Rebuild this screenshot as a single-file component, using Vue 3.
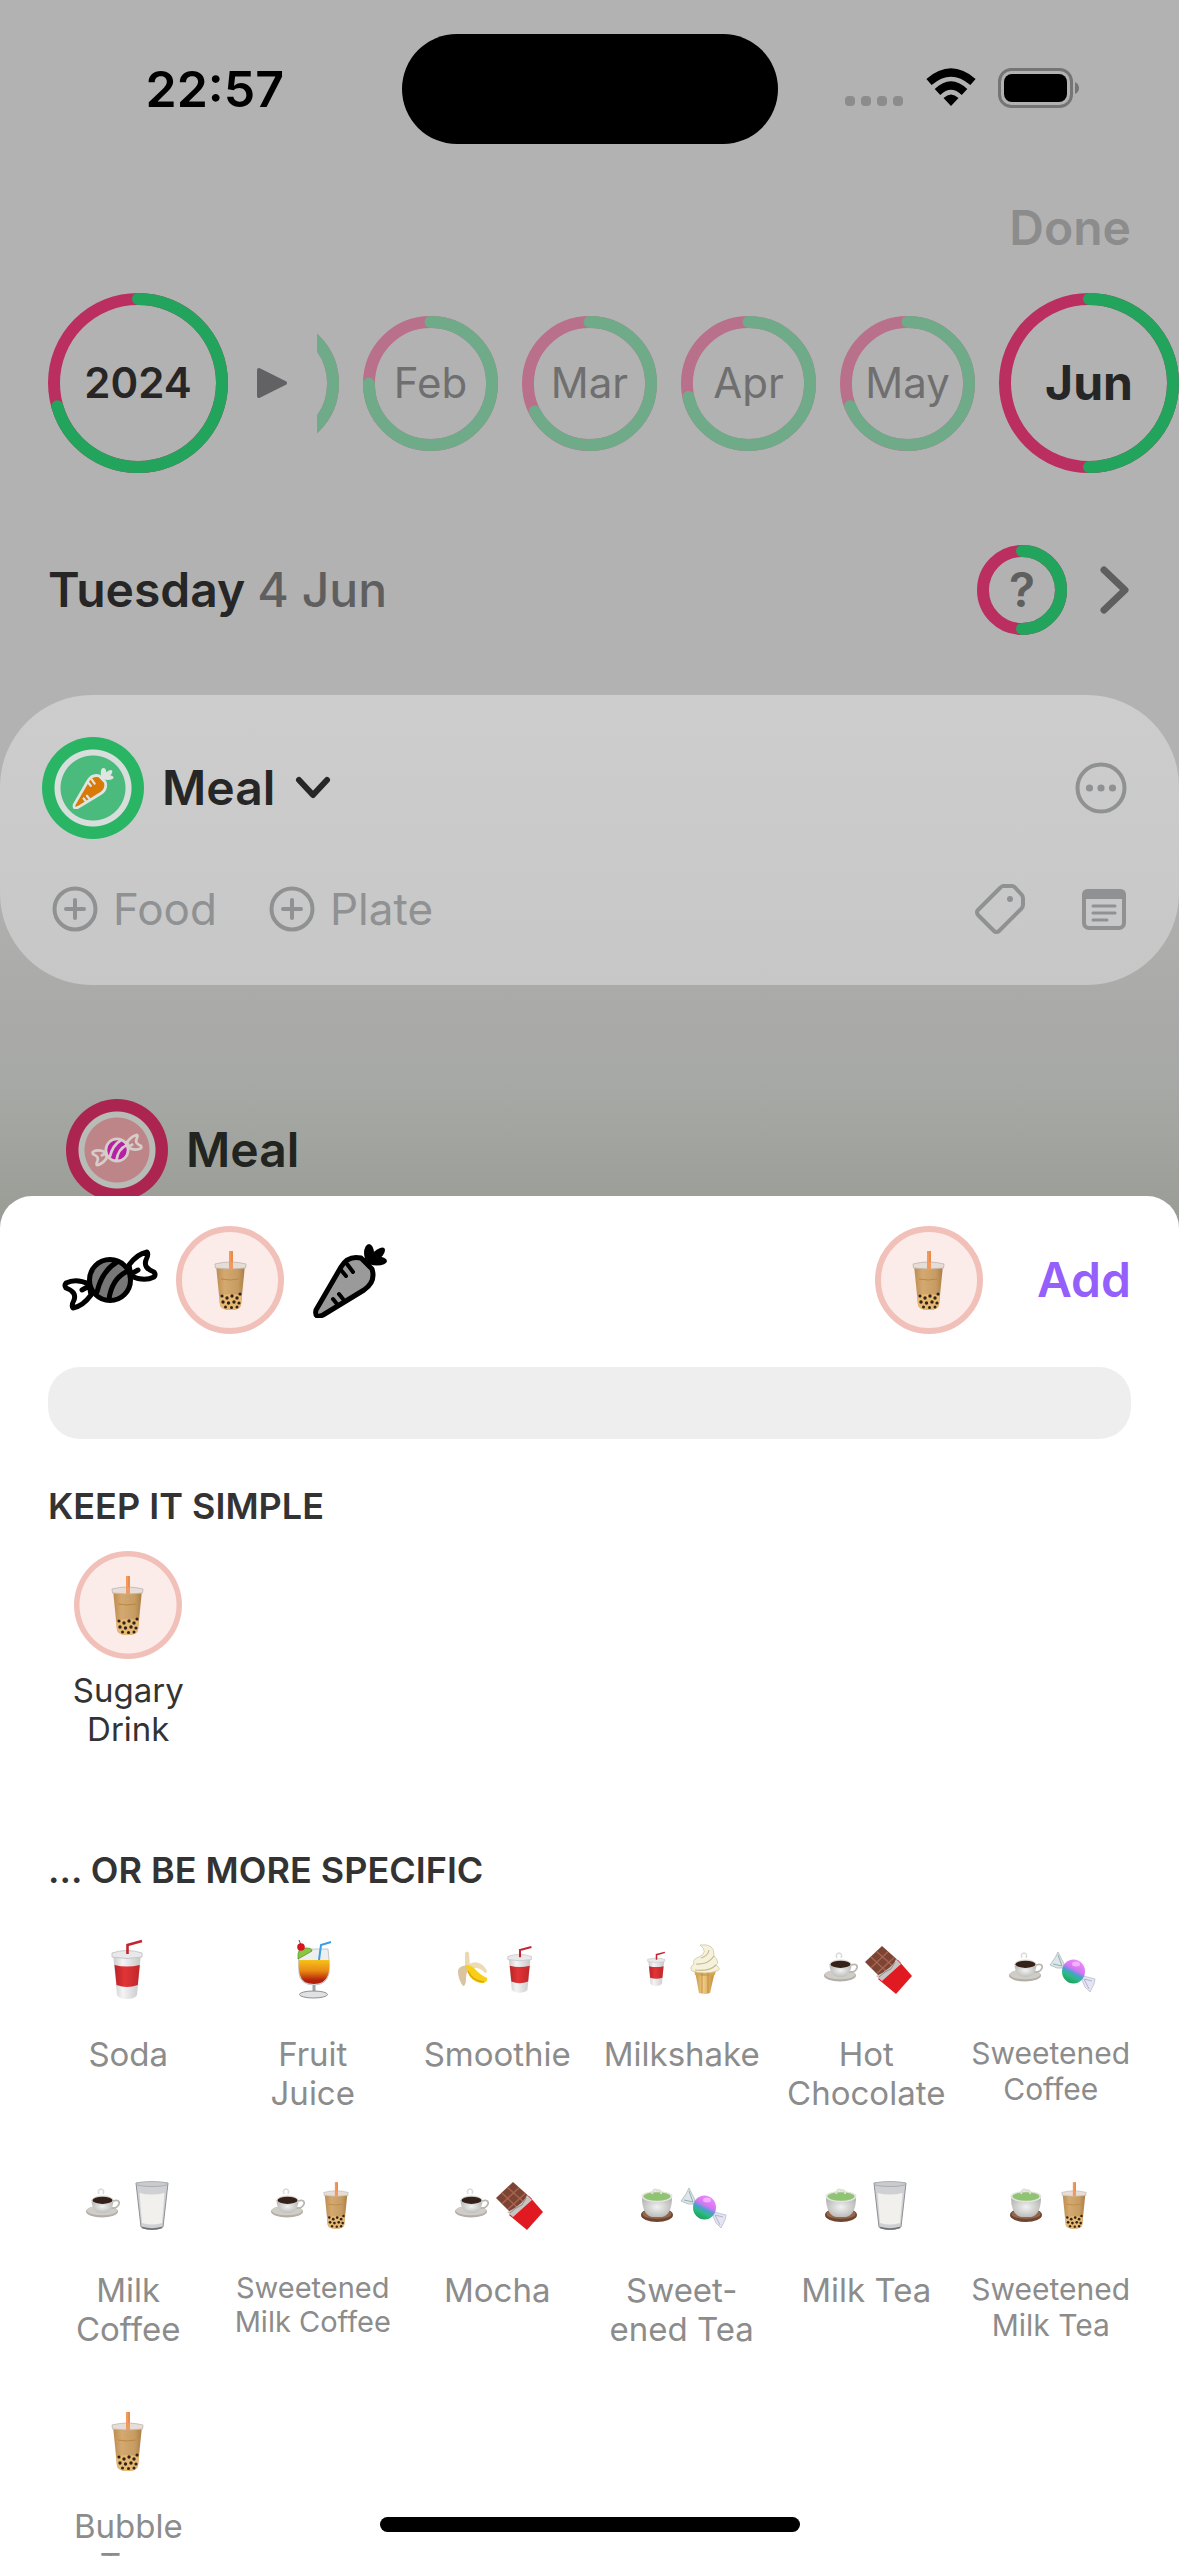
<script setup>
import { ref } from 'vue'

const search = ref('')

// January is scrolled mostly out of view, so only its arc is drawn
const months = [
  { id: 'January', label: '', good: 72 },
  { id: 'February', label: 'Feb', good: 75 },
  { id: 'March', label: 'Mar', good: 67.5 },
  { id: 'April', label: 'Apr', good: 71.5 },
  { id: 'May', label: 'May', good: 69 },
  { id: 'June', label: 'Jun', good: 50, current: true },
]

// Icon placement inside the 108 x 108 artwork box of a tile
const coffee = { id: 'coffee', x: 12, y: 36, w: 34, h: 31 }
const tea = { id: 'tea', x: 13, y: 36, w: 32, h: 35 }
const boba = { id: 'boba', x: 37, y: 24, w: 33, h: 60 }
const bobaSmall = { id: 'boba', x: 64, y: 30, w: 26, h: 48 }
const chocolate = { id: 'chocolate', x: 53, y: 30, w: 47, h: 49 }
const sweet = { id: 'sweet', x: 52, y: 36, w: 47, h: 42 }
const milk = { id: 'milk', x: 61, y: 30, w: 34, h: 49 }

const simple = [{ lines: ['Sugary', 'Drink'], art: [boba] }]

const specific = [
  { lines: ['Soda'], art: [{ id: 'soda', x: 37, y: 24, w: 33, h: 60 }] },
  { lines: ['Fruit', 'Juice'], art: [{ id: 'juice', x: 37, y: 24, w: 36, h: 60 }] },
  { lines: ['Smoothie'], art: [{ id: 'banana', x: 14, y: 36, w: 31, h: 36 }, { id: 'soda', x: 64, y: 30, w: 26, h: 48 }] },
  { lines: ['Milkshake'], art: [{ id: 'soda', x: 19, y: 36, w: 19, h: 35 }, { id: 'cone', x: 62, y: 29, w: 30, h: 50 }] },
  { lines: ['Hot', 'Chocolate'], art: [coffee, chocolate] },
  { lines: ['Sweetened', 'Coffee'], size: 'medium', art: [coffee, sweet] },
  { lines: ['Milk', 'Coffee'], art: [coffee, milk] },
  { lines: ['Sweetened', 'Milk Coffee'], size: 'small', art: [coffee, bobaSmall] },
  { lines: ['Mocha'], art: [coffee, chocolate] },
  { lines: ['Sweet-', 'ened Tea'], art: [tea, sweet] },
  { lines: ['Milk Tea'], art: [tea, milk] },
  { lines: ['Sweetened', 'Milk Tea'], size: 'medium', art: [tea, bobaSmall] },
  { lines: ['Bubble', 'Tea'], art: [boba] },
]
</script>

<template>
  <div class="screen">
    <svg class="sprite" width="0" height="0" aria-hidden="true">
      <defs>
        <linearGradient id="gTea" x1="0" x2="1" y1="0" y2="0">
          <stop offset="0" stop-color="#bb8c50" /><stop offset=".3" stop-color="#d4a970" />
          <stop offset=".75" stop-color="#c79c62" /><stop offset="1" stop-color="#a97c42" />
        </linearGradient>
        <linearGradient id="gCup" x1="0" x2="1" y1="0" y2="0">
          <stop offset="0" stop-color="#c9c9cb" /><stop offset=".35" stop-color="#f4f4f5" />
          <stop offset="1" stop-color="#c6c6c9" />
        </linearGradient>
        <linearGradient id="gRed" x1="0" x2="1" y1="0" y2="0">
          <stop offset="0" stop-color="#b92327" /><stop offset=".4" stop-color="#e13437" />
          <stop offset="1" stop-color="#c0272b" />
        </linearGradient>
        <linearGradient id="gJuice" x1="0" x2="0" y1="0" y2="1">
          <stop offset="0" stop-color="#f6c21c" /><stop offset=".45" stop-color="#e98a12" />
          <stop offset=".85" stop-color="#b3200b" />
        </linearGradient>
        <linearGradient id="gSweet" x1=".8" x2=".3" y1="0" y2="1">
          <stop offset="0" stop-color="#f08bff" /><stop offset=".42" stop-color="#d476f2" />
          <stop offset=".58" stop-color="#4a9fd0" /><stop offset=".72" stop-color="#2dbb83" />
          <stop offset="1" stop-color="#1d9c5d" />
        </linearGradient>
        <linearGradient id="gCone" x1="0" x2="1" y1="0" y2="0">
          <stop offset="0" stop-color="#c99343" /><stop offset=".4" stop-color="#f0cd85" />
          <stop offset="1" stop-color="#c08836" />
        </linearGradient>
        <radialGradient id="gBowl" cx=".5" cy=".5" r=".7">
          <stop offset="0" stop-color="#f1f1f1" /><stop offset="1" stop-color="#a9a9a7" />
        </radialGradient>
      </defs>

      <symbol id="boba" viewBox="0 0 33 60">
        <path d="M2 15 L6 55 Q7 60 16.500 60 Q26 60 27 55 L31 15Z" fill="url(#gTea)" />
        <path d="M5.200 46 L6 55 Q7 60 16.500 60 Q26 60 27 55 L27.800 46 Q17 42 5.200 46Z" fill="#e6b872" />
        <path d="M1 14 Q16.500 10 32 14 L31.500 18 Q16.500 20 1.500 18Z" fill="#e6ddd6" stroke="#bdb5b0" stroke-width=".8" />
        <path d="M17 1 V19" stroke="#f29a5e" stroke-width="4" />
        <path d="M18 1 V12" stroke="#e0803f" stroke-width="1" />
        <path d="M7 29 Q16 31 25 29" stroke="#b98843" stroke-width="1" fill="none" />
        <g fill="#2f2419">
          <circle cx="8" cy="46" r="1.600" /><circle cx="13" cy="48" r="1.700" /><circle cx="18" cy="46" r="1.700" /><circle cx="23" cy="48" r="1.700" /><circle cx="26" cy="44" r="1.500" />
          <circle cx="9" cy="52" r="1.700" /><circle cx="14.500" cy="53" r="1.700" /><circle cx="20" cy="52" r="1.700" /><circle cx="25" cy="53" r="1.600" />
          <circle cx="11.500" cy="57" r="1.500" /><circle cx="17.500" cy="57.500" r="1.500" /><circle cx="23" cy="57" r="1.500" />
        </g>
      </symbol>

      <symbol id="soda" viewBox="0 0 33 60">
        <path d="M2 14 L6 56 Q8 60 16 60 Q24 60 26 56 L30 14Z" fill="url(#gCup)" />
        <path d="M1 14 Q16 9 31 14 L31 18 Q16 21 1 18Z" fill="#e9e9ea" stroke="#bebec1" stroke-width=".8" />
        <path d="M3.500 26 Q16 29 28.800 26 L26.800 46 Q16 50 5.500 46Z" fill="url(#gRed)" />
        <path d="M16.500 15 V6 L31 2" stroke="#c32430" stroke-width="2.600" fill="none" />
      </symbol>

      <symbol id="juice" viewBox="0 0 36 60">
        <path d="M3 10 H32 Q34 24 33 34 Q31 46 18 46 Q4 46 3 34 Q2 22 3 10Z" fill="#eceeef" stroke="#b7bcc0" stroke-width=".8" />
        <path d="M3 21 H33 Q34 30 32 36 Q29 45 18 45 Q6 45 4 36 Q2 30 3 21Z" fill="url(#gJuice)" />
        <path d="M18 46 V54" stroke="#9da1a3" stroke-width="3" />
        <ellipse cx="17.500" cy="55.500" rx="14" ry="3.500" fill="#dfe1e2" stroke="#8e9294" stroke-width="1" />
        <path d="M2 20 Q1 8 10 9 Q16 9 16 12Z" fill="#8cc63f" stroke="#4f9a2b" stroke-width=".8" />
        <path d="M3 1 L5 6" stroke="#7a4a2a" stroke-width="1" />
        <circle cx="5" cy="8" r="3.800" fill="#d9131b" />
        <path d="M23 21 L25 6 L35 3" stroke="#3a9fe2" stroke-width="2" fill="none" />
      </symbol>

      <symbol id="banana" viewBox="0 0 31 36">
        <path d="M8 2 Q10 -1 12 2 L13 16 L8 16Z" fill="#ead9ae" />
        <path d="M10 14 Q0 15 1 22 Q2 30 6 35 Q9 35 9 28 Q9 20 13 18Z" fill="#d9c3a0" />
        <path d="M12 13 Q22 8 29 18 Q31 22 28 22 Q22 15 13 18Z" fill="#ecdbb5" />
        <path d="M9 15 Q12 13 17 17 Q23 24 30 27 Q31 31 26 32 Q12 32 9 15Z" fill="#f8cf16" />
        <path d="M11 20 Q15 30 27 31" stroke="#dda50b" stroke-width="1.500" fill="none" />
      </symbol>

      <symbol id="cone" viewBox="0 0 30 50">
        <path d="M5 27 H25 L20 49 Q15 51 9 49Z" fill="url(#gCone)" />
        <path d="M4 25 H26 L25 31 Q15 33 5 31Z" fill="#d6a654" />
        <path d="M12 29 V49 M18 29 V49" stroke="#b98438" stroke-width=".8" />
        <path d="M10 1 Q25 -1 24 12 Q30 18 26 21 Q32 25 27 27 Q15 31 2 27 Q-1 23 4 20 Q2 15 9 13 Q19 8 10 1Z" fill="#f5f1dd" stroke="#cfc79d" stroke-width=".8" />
        <path d="M6 20 Q18 21 24 12 M5 26 Q19 28 26 21 M11 14 Q18 12 19 6" stroke="#c4bd8b" stroke-width="1.200" fill="none" />
      </symbol>

      <symbol id="coffee" viewBox="0 0 34 31">
        <ellipse cx="16" cy="24.500" rx="16" ry="6" fill="#b3afa8" />
        <ellipse cx="16" cy="23.500" rx="15" ry="4.800" fill="#d0cdc7" />
        <path d="M27 14 Q34 12 33 17 Q31 22 25 21" stroke="#b9b6af" stroke-width="1.800" fill="none" />
        <path d="M5.500 13 Q6 26 16.500 26 Q27 26 27.500 13Z" fill="url(#gBowl)" />
        <ellipse cx="16.500" cy="13" rx="11" ry="4.400" fill="#dbd8d2" />
        <ellipse cx="16.500" cy="13.300" rx="10" ry="3.600" fill="#33211a" />
        <path d="M13 7 Q11 3 15 2 Q19 3 17 7" stroke="#dcdcdc" stroke-width="1.600" fill="none" />
      </symbol>

      <symbol id="tea" viewBox="0 0 32 35">
        <ellipse cx="16" cy="28" rx="16" ry="7" fill="#6d4531" />
        <ellipse cx="16" cy="27" rx="14.500" ry="5" fill="#94664c" />
        <path d="M1 10 Q1 28 11 30 H21 Q31 28 31 10Z" fill="url(#gBowl)" />
        <ellipse cx="16" cy="9.500" rx="15.500" ry="5.500" fill="#e4e4df" />
        <ellipse cx="16" cy="9.500" rx="13.500" ry="4.200" fill="#8fc472" />
        <path d="M11 7 Q12 1 16 3 Q21 3 20 7" stroke="#d9e2d5" stroke-width="2" fill="none" />
      </symbol>

      <symbol id="chocolate" viewBox="0 0 47 49">
        <path d="M17 1 L36 18 L17 34 L0 17Z" fill="#7c4433" />
        <path d="M5.700 11.700 L23 28 M11.300 6.300 L30 23 M23 6.700 L6 22.700 M29.500 12.300 L12 28.300" stroke="#a86450" stroke-width="1.400" />
        <path d="M33 15 L47 31 L31 49 L13 34Z" fill="#e01a20" />
        <path d="M31 14 L36 19 L17 36 L11 31 Q18 28 20 26 Q29 20 31 14Z" fill="#c7c5c3" />
        <path d="M30 17 L26 24 L20 27 L14 32" stroke="#8f8b88" stroke-width="1" fill="none" />
      </symbol>

      <symbol id="sweet" viewBox="0 0 47 42">
        <path d="M15 13 L9 1 L6 7 L1 14 L8 17 L14 17Z" fill="#dce5e7" stroke="#a7b8bb" stroke-width=".8" />
        <path d="M4 13 L13 15 L9 4" stroke="#8fb0ad" fill="none" stroke-width="1" />
        <path d="M34 25 L46 28 L45 33 L41 41 L36 36 L33 29Z" fill="#e4e5f1" stroke="#b9bcd2" stroke-width=".8" />
        <path d="M43 30 L35 28 L40 38" stroke="#b0b3d0" fill="none" stroke-width="1" />
        <ellipse cx="24.500" cy="20.500" rx="11.500" ry="12" fill="url(#gSweet)" />
        <ellipse cx="27" cy="13" rx="4" ry="2.500" fill="#fbc4ff" opacity=".7" />
      </symbol>

      <symbol id="milk" viewBox="0 0 34 49">
        <path d="M1 2 L6 46 Q17 51 28 46 L33 2Z" fill="#cfd0d3" stroke="#8d9094" stroke-width="1" />
        <path d="M4.500 12 Q17 15 29.500 12 L27 42 Q17 45 7 42Z" fill="#f1f0ed" />
        <ellipse cx="17" cy="3" rx="16" ry="2.500" fill="#c9cbcd" stroke="#a1a4a8" stroke-width=".8" />
        <path d="M7 46.500 Q17 49.500 27 46.500" stroke="#6f7275" stroke-width="1.600" fill="none" />
      </symbol>

      <symbol id="candy-line" viewBox="0 0 96 62">
        <g stroke="currentColor" stroke-width="5" stroke-linecap="round" stroke-linejoin="round">
          <path class="wing" d="M67 16 Q75 5 85 3 Q87 5 84 11 Q81 19 92 23 Q94 26 92 28 Q82 33 69 27Z M76 21 L69 25" />
          <path class="wing" d="M29 46 Q21 57 11 59 Q9 57 12 51 Q15 43 4 39 Q2 36 4 34 Q14 29 27 35Z M20 41 L27 37" />
          <circle cx="48" cy="31" r="20.500" class="body" />
          <path d="M55 13 Q40 22 35 43 M66 22 Q50 29 47 50" fill="none" />
        </g>
      </symbol>

      <symbol id="carrot-line" viewBox="0 0 76 76">
        <g fill="currentColor">
          <ellipse cx="57" cy="11" rx="5" ry="9" />
          <ellipse cx="65" cy="13" rx="4.500" ry="10" transform="rotate(48 65 13)" />
          <ellipse cx="65" cy="19" rx="10" ry="4.500" />
          <circle cx="57" cy="18" r="5" />
        </g>
        <path class="body" d="M4 68 L29 25 Q36 13 49 16 L60 27 Q64 40 52 48 L11 73 Q2 77 4 68Z" stroke="currentColor" stroke-width="5" stroke-linejoin="round" />
        <path d="M35 22 L41 30 M29 28 L34 34 M27 52 L31 57 M21 57 L25 62" stroke="currentColor" stroke-width="4" stroke-linecap="round" />
      </symbol>
    </svg>

    <main class="diary">
      <div class="status">
        <time class="clock">22:57</time>
        <div class="island"></div>
        <div class="signals">
          <svg width="60" height="40" viewBox="0 0 60 40" fill="#8c8c8c">
            <rect x="1" y="28" width="10" height="10" rx="4" /><rect x="17" y="28" width="10" height="10" rx="4" />
            <rect x="33" y="28" width="10" height="10" rx="4" /><rect x="49" y="28" width="10" height="10" rx="4" />
          </svg>
          <svg width="52" height="40" viewBox="0 0 52 40" fill="none" stroke="#000" stroke-width="8">
            <path d="M4 14 Q26 -5 48 14" /><path d="M12.500 24 Q26 11 39.500 24" />
            <path d="M26 38 L18.500 30 Q26 23 33.500 30Z" fill="#000" stroke="none" />
          </svg>
          <svg width="84" height="40" viewBox="0 0 84 40">
            <rect x="1.500" y="1.500" width="72" height="37" rx="12" fill="none" stroke="#757575" stroke-width="3" />
            <rect x="6" y="6" width="63" height="28" rx="8" />
            <path d="M77 14 Q81 16 81 20 Q81 24 77 26Z" fill="#757575" />
          </svg>
        </div>
      </div>

      <div class="top-action"><button class="done">Done</button></div>

      <nav class="periods">
        <button class="ring large year">
          <svg viewBox="0 0 180 180" class="arc">
            <circle cx="90" cy="90" r="84" class="bad" />
            <circle cx="90" cy="90" r="84" class="good" pathLength="100" stroke-dasharray="70.5 100" />
          </svg>
          <span>2024</span>
        </button>
        <svg class="play" width="32" height="32" viewBox="0 0 32 32"><path d="M3 3 L29 16 L3 29Z" fill="#626264" stroke="#626264" stroke-width="4" stroke-linejoin="round" /></svg>
        <div class="months">
          <button v-for="m in months" :key="m.id" class="ring" :class="m.current ? 'large current' : 'faded'" :aria-label="m.id">
            <svg v-if="m.current" viewBox="0 0 180 180" class="arc">
              <circle cx="90" cy="90" r="84" class="bad" />
              <circle cx="90" cy="90" r="84" class="good" pathLength="100" :stroke-dasharray="`${m.good} 100`" />
            </svg>
            <svg v-else viewBox="0 0 136 136" class="arc">
              <circle cx="68" cy="68" r="62" class="bad" />
              <circle cx="68" cy="68" r="62" class="good" pathLength="100" :stroke-dasharray="`${m.good} 100`" />
            </svg>
            <span v-if="m.label">{{ m.label }}</span>
          </button>
        </div>
      </nav>

      <div class="day">
        <h1>Tuesday <span>4 Jun</span></h1>
        <button class="ring mini">
          <svg viewBox="0 0 90 90" class="arc">
            <circle cx="45" cy="45" r="39" class="bad" />
            <circle cx="45" cy="45" r="39" class="good" pathLength="100" stroke-dasharray="50 100" />
          </svg>
          <span>?</span>
        </button>
        <button class="plain" aria-label="Next day">
          <svg width="30" height="48" viewBox="0 0 30 48"><path d="M5 4 L26 24 L5 44" fill="none" stroke="#5f5f5f" stroke-width="7" stroke-linecap="round" stroke-linejoin="round" /></svg>
        </button>
      </div>

      <section class="card">
        <div class="card-head">
          <span class="badge veg"><svg width="42" height="42"><use href="#carrot-line" /></svg></span>
          <button class="plain meal">Meal
            <svg width="36" height="24" viewBox="0 0 36 24"><path d="M4 4 L18 19 L32 4" fill="none" stroke="#262626" stroke-width="6" stroke-linecap="round" stroke-linejoin="round" /></svg>
          </button>
          <button class="plain push" aria-label="More">
            <svg width="52" height="52" viewBox="0 0 52 52" fill="#8f9193">
              <circle cx="26" cy="26" r="23.500" fill="none" stroke="#8f9193" stroke-width="4" />
              <circle cx="14.500" cy="26" r="3.600" /><circle cx="26" cy="26" r="3.600" /><circle cx="37.500" cy="26" r="3.600" />
            </svg>
          </button>
        </div>
        <div class="card-actions">
          <button v-for="a in ['Food', 'Plate']" :key="a" class="plain add-item">
            <svg width="46" height="46" viewBox="0 0 46 46" fill="none" stroke="#8f9193" stroke-width="4" stroke-linecap="round">
              <circle cx="23" cy="23" r="20.500" /><path d="M23 14 V32 M14 23 H32" />
            </svg>
            {{ a }}
          </button>
          <button class="plain push" aria-label="Tag">
            <svg width="50" height="50" viewBox="0 0 50 50" fill="none" stroke="#8f9193" stroke-width="4" stroke-linejoin="round">
              <path d="M28 2 H37 Q39 2 40.500 4 L46 10 Q48 12 48 14 V21 Q48 23 46 25 L24 47 Q21 49 19 47 L3 31 Q1 28 3 26 L25 4 Q27 2 28 2Z" />
              <circle cx="35" cy="15" r="3" fill="#8f9193" stroke="none" />
            </svg>
          </button>
          <button class="plain note" aria-label="Note">
            <svg width="46" height="42" viewBox="0 0 46 42" fill="none" stroke="#8f9193" stroke-linecap="round">
              <rect x="3" y="3" width="40" height="37" rx="5" stroke-width="4" />
              <path d="M3 9 V7 Q3 3 7 3 H39 Q43 3 43 7 V9Z" fill="#8f9193" stroke-width="4" />
              <path d="M12 18 H34 M12 25 H34 M12 32 H26" stroke-width="3" />
            </svg>
          </button>
        </div>
      </section>

      <section class="entry">
        <span class="badge sugar"><svg width="52" height="34"><use href="#candy-line" /></svg></span>
        <span class="meal">Meal</span>
      </section>
    </main>

    <section class="sheet">
      <div class="toolbar">
        <button class="pick" aria-label="Sweets"><svg class="ink dark" width="96" height="62"><use href="#candy-line" /></svg></button>
        <button class="pick selected" aria-label="Sugary drinks"><svg width="33" height="60"><use href="#boba" /></svg></button>
        <button class="pick" aria-label="Vegetables"><svg class="ink" width="76" height="76"><use href="#carrot-line" /></svg></button>
        <span class="pick selected push"><svg width="33" height="60"><use href="#boba" /></svg></span>
        <button class="plain add">Add</button>
      </div>

      <input v-model="search" class="search" type="text" aria-label="Search" />

      <h2>KEEP IT SIMPLE</h2>
      <div class="tiles">
        <button v-for="d in simple" :key="d.lines[0]" class="tile chosen">
          <svg class="art" viewBox="0 0 108 108">
            <use v-for="(i, n) in d.art" :key="n" :href="`#${i.id}`" :x="i.x" :y="i.y" :width="i.w" :height="i.h" />
          </svg>
          <span class="label"><span v-for="l in d.lines" :key="l">{{ l }}</span></span>
        </button>
      </div>

      <h2 class="second">... OR BE MORE SPECIFIC</h2>
      <div class="tiles">
        <button v-for="d in specific" :key="d.lines.join(' ')" class="tile">
          <svg class="art" viewBox="0 0 108 108">
            <use v-for="(i, n) in d.art" :key="n" :href="`#${i.id}`" :x="i.x" :y="i.y" :width="i.w" :height="i.h" />
          </svg>
          <span class="label" :class="d.size"><span v-for="l in d.lines" :key="l">{{ l }}</span></span>
        </button>
      </div>
    </section>

    <div class="home"></div>
  </div>
</template>

<style>
body { margin: 0; }
</style>

<style scoped>
* { box-sizing: border-box; }
.screen {
  position: relative;
  display: flex;
  flex-direction: column;
  height: 100vh;
  overflow: hidden;
  font-family: Inter, "Liberation Sans", sans-serif;
  color: #262626;
  background: linear-gradient(180deg, #b2b2b2 0, #b2b2b2 860px, #aaaaa9 1000px, #a7a9a6 1080px, #9c9f98 1200px, #8f938c 1300px);
}
.sprite { position: absolute; }
svg { display: block; flex: none; }
button {
  border: 0;
  padding: 0;
  background: none;
  font-family: inherit;
  color: inherit;
}
.push { margin-left: auto; }
.diary { flex: none; }

.status {
  display: grid;
  grid-template-columns: 1fr 376px 1fr;
  align-items: center;
  padding-top: 34px;
}
.clock {
  padding-left: 28px;
  text-align: center;
  font-size: 50px;
  line-height: 60px;
  font-weight: 600;
  color: #000;
}
.island { height: 110px; border-radius: 55px; background: #000; }
.signals {
  display: flex;
  justify-content: flex-end;
  gap: 21px;
  padding: 0 97px 2px 0;
}

.top-action {
  display: flex;
  justify-content: flex-end;
  margin-top: 54px;
  padding-right: 48px;
}
.done { font-size: 48px; line-height: 60px; font-weight: 600; color: #8c8c8c; }

.periods {
  display: flex;
  align-items: center;
  margin-top: 35px;
  padding-left: 48px;
}
.play { margin: 0 29px 0 28px; }
.months {
  flex: 1;
  min-width: 0;
  display: flex;
  justify-content: flex-end;
  align-items: center;
  gap: 24px;
  overflow: hidden;
}
.ring {
  flex: none;
  display: grid;
  place-items: center;
  width: 135px;
  height: 135px;
  font-size: 42px;
  line-height: 54px;
  color: #6f6f6f;
}
.ring > * { grid-area: 1 / 1; }
.ring.large { width: 180px; height: 180px; color: #262626; }
.ring.year { font-weight: 600; }
.ring.current { font-size: 48px; font-weight: 700; }
.ring.mini { width: 90px; height: 90px; font-size: 48px; font-weight: 600; color: #5f5f5f; }
.arc { width: 100%; height: 100%; transform: rotate(-90deg); }
.arc circle { fill: none; stroke-width: 12; }
.bad { stroke: #ba2f5f; }
.good { stroke: #22a45c; stroke-linecap: round; }
.faded .bad { stroke: #b9718b; }
.faded .good { stroke: #6fab88; }

.day {
  display: flex;
  align-items: center;
  margin-top: 72px;
  padding: 0 50px 0 48px;
}
.day h1 {
  flex: 1;
  margin: 0;
  font-size: 48px;
  line-height: 60px;
  font-weight: 600;
}
.day h1 span { color: #5f5f5f; font-weight: 500; }
.day .plain { margin-left: 32px; }

.card {
  margin-top: 60px;
  padding: 42px 52px 51px 42px;
  border-radius: 92px;
  background: linear-gradient(180deg, #cdcdcd, #c7c7c7);
}
.card-head { display: flex; align-items: center; gap: 18px; }
.badge {
  display: grid;
  place-items: center;
  width: 102px;
  height: 102px;
  border-radius: 50%;
}
.badge.veg {
  color: #dfe6e1;
  fill: #d97a08;
  background: radial-gradient(circle, #4abb7c 32px, #d8dedb 33px, #d8dedb 38px, #29b564 39px);
}
.badge.sugar {
  color: #d6cdca;
  fill: #b520a5;
  background: radial-gradient(circle, #bd8588 32px, #b8bcb6 33px, #b8bcb6 38px, #ab2550 39px);
}
.wing { fill: none; }
.meal {
  display: flex;
  align-items: center;
  gap: 20px;
  font-size: 48px;
  line-height: 60px;
  font-weight: 600;
}
.card-actions {
  display: flex;
  align-items: center;
  gap: 52px;
  margin-top: 45px;
  padding-left: 10px;
}
.note { margin-left: 4px; }
.add-item {
  display: flex;
  align-items: center;
  gap: 15px;
  font-size: 44px;
  line-height: 50px;
  color: #8f9193;
}

.entry {
  display: flex;
  align-items: center;
  gap: 18px;
  margin-top: 114px;
  padding-left: 66px;
}
.entry .meal { color: #22241f; }

.sheet {
  position: relative;
  flex: 1 0 auto;
  margin-top: -5px;
  padding-top: 30px;
  border-radius: 32px 32px 0 0;
  background: #fff;
}
.toolbar {
  display: flex;
  align-items: center;
  gap: 12px;
  padding: 0 48px 0 56px;
}
.pick {
  display: grid;
  place-items: center;
  width: 108px;
  height: 108px;
  border-radius: 50%;
}
.pick.push { margin-left: auto; }
.selected { border: 6px solid #f1c0b9; background: #fbebe9; }
.ink { color: #000; fill: #9a9a9a; }
.ink.dark { fill: #777; }
.add {
  margin-left: 42px;
  font-size: 48px;
  line-height: 60px;
  font-weight: 600;
  color: #945ffb;
}
.search {
  display: block;
  width: calc(100% - 96px);
  height: 72px;
  margin: 33px 48px 0;
  padding: 0 30px;
  border: 0;
  border-radius: 32px;
  background: #eee;
  font: 44px/54px Inter, sans-serif;
}
h2 {
  margin: 46px 48px 24px;
  font-size: 36px;
  line-height: 42px;
  font-weight: 600;
  color: #333;
}
h2.second { margin-top: 100px; }
.tiles {
  display: grid;
  grid-template-columns: repeat(6, 1fr);
  row-gap: 38px;
  align-items: start;
  padding: 0 36px;
}
.tile {
  display: flex;
  flex-direction: column;
  align-items: center;
  gap: 12px;
  color: #8c8c8c;
}
.art { width: 108px; height: 108px; }
.label {
  display: flex;
  flex-direction: column;
  align-items: center;
  font-size: 33px;
  line-height: 39px;
  white-space: nowrap;
}
.label.medium { font-size: 30px; line-height: 36px; }
.label.small { font-size: 29px; line-height: 34px; }
.chosen { color: #333; }
.chosen .art {
  border-radius: 50%;
  background: radial-gradient(circle, #fbebe9 48px, #f1c0b9 49px);
}
.home {
  position: absolute;
  left: 50%;
  bottom: 24px;
  width: 420px;
  height: 15px;
  margin-left: -210px;
  border-radius: 8px;
  background: #000;
}
</style>
